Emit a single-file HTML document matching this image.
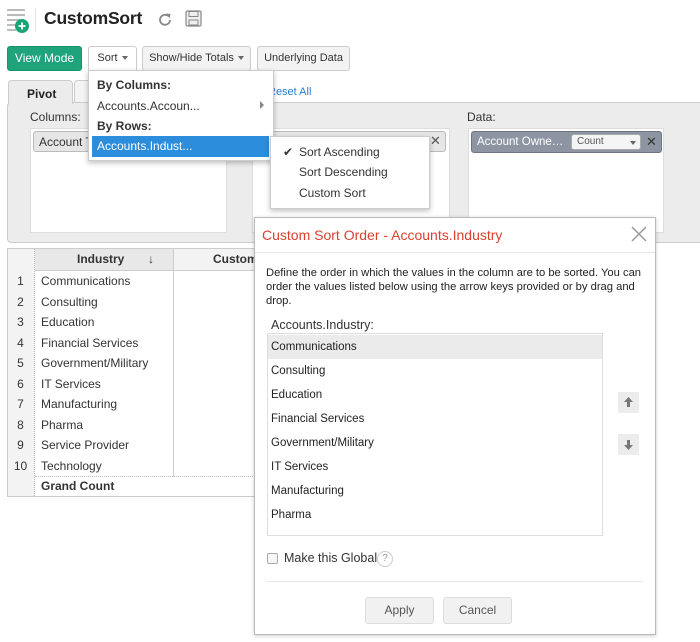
<!DOCTYPE html>
<html><head><meta charset="utf-8"><style>
*{box-sizing:border-box;margin:0;padding:0}
body{width:700px;height:642px;background:#fff;font-family:"Liberation Sans",Arial,sans-serif;font-size:12px;color:#333;position:relative;overflow:hidden}
.a{position:absolute}
.btn{position:absolute;top:46px;height:25px;border:1px solid #ccc;border-radius:3px;background:#f3f3f3;font-size:11px;color:#333;line-height:23px;text-align:center}
.caret{display:inline-block;width:0;height:0;border-left:3.5px solid transparent;border-right:3.5px solid transparent;border-top:4px solid #666;vertical-align:middle;margin-left:4px}
.box{position:absolute;background:#fff;border:1px solid #ddd}
.row{position:absolute;left:7px;width:167px;height:20.5px;line-height:20.5px;font-size:12px;color:#333}
.row .n{position:absolute;left:0;width:27px;text-align:center}
.row .t{position:absolute;left:34px}
.li{position:absolute;left:268px;width:334px;height:24px;line-height:24px;padding-left:3px;font-size:11.5px;color:#222}
</style></head><body>
<svg class="a" style="left:6px;top:8px" width="24" height="26" viewBox="0 0 24 26">
<g stroke="#bbb" stroke-width="2"><line x1="1" y1="2" x2="19" y2="2"/><line x1="1" y1="7" x2="19" y2="7"/><line x1="1" y1="12" x2="14" y2="12"/><line x1="1" y1="17" x2="10" y2="17"/><line x1="1" y1="22" x2="10" y2="22"/></g>
<circle cx="16" cy="18" r="7" fill="#18a576"/><path d="M16 14.5v7M12.5 18h7" stroke="#fff" stroke-width="1.8"/></svg>
<div class="a" style="left:35px;top:8px;width:1px;height:24px;background:#e3e3e3"></div>
<div class="a" style="left:44px;top:8px;font-size:17.5px;font-weight:bold;color:#222;letter-spacing:-0.2px">CustomSort</div>
<svg class="a" style="left:157px;top:11px" width="17" height="17" viewBox="0 0 17 17"><path d="M13 9a5 5 0 1 1-2-4.2" fill="none" stroke="#888" stroke-width="1.8"/><path d="M9 2.5l4.5 0.5-1 4.5z" fill="#888"/></svg>
<svg class="a" style="left:185px;top:10px" width="17" height="17" viewBox="0 0 17 17"><rect x="1" y="1" width="15" height="15" rx="1.5" fill="#eee" stroke="#888" stroke-width="1.2"/><rect x="4" y="1.5" width="9" height="5" fill="none" stroke="#888"/><rect x="4" y="10" width="9" height="5" fill="none" stroke="#888"/></svg>
<div class="btn" style="left:7px;width:75px;background:#1fa37b;border-color:#17936d;color:#fff;font-size:12px">View Mode</div>
<div class="btn" style="left:88px;width:49px;background:#fff;border-bottom-color:#fff;height:26px">Sort<span class="caret"></span></div>
<div class="btn" style="left:142px;width:109px">Show/Hide Totals<span class="caret"></span></div>
<div class="btn" style="left:257px;width:93px">Underlying Data</div>
<div class="a" style="left:7px;top:102px;width:700px;height:141px;background:#ececec;border:1px solid #ccc;border-radius:4px 0 0 4px"></div>
<div class="a" style="left:8px;top:80px;width:65px;height:24px;background:#ececec;border:1px solid #ccc;border-bottom:none;border-radius:4px 4px 0 0;font-weight:bold;font-size:12px;padding:6px 0 0 18px;color:#222">Pivot</div>
<div class="a" style="left:74px;top:80px;width:50px;height:22px;background:#f4f4f4;border:1px solid #ccc;border-bottom:none;border-radius:4px 4px 0 0"></div>
<div class="a" style="left:268px;top:86px;color:#2a7dd0;font-size:11px">Reset All</div>
<div class="a" style="left:30px;top:110px;font-size:12px">Columns:</div>
<div class="box" style="left:30px;top:128px;width:197px;height:105px"></div>
<div class="a" style="left:33px;top:131px;width:90px;height:21px;background:#e6e6e6;border:1px solid #bbb;border-radius:3px;padding:3px 5px;font-size:12px">Account Type</div>
<div class="box" style="left:252px;top:128px;width:198px;height:105px"></div>
<div class="a" style="left:256px;top:131px;width:190px;height:21px;background:#e6e6e6;border:1px solid #bbb;border-radius:3px"></div>
<div class="a" style="left:430px;top:133px;font-size:13px;color:#555">✕</div>
<div class="a" style="left:467px;top:110px;font-size:12px">Data:</div>
<div class="box" style="left:468px;top:128px;width:196px;height:105px"></div>
<div class="a" style="left:471px;top:131px;width:191px;height:22px;background:#8d95a2;border:1px solid #6e7683;border-radius:3px;padding:4px 5px;font-size:11.5px;color:#fff">Account Owne…</div>
<div class="a" style="left:571px;top:134px;width:70px;height:16px;background:#f5f5f5;border:1px solid #aaa;border-radius:3px;font-size:10px;padding:1px 5px;color:#555">Count<span class="caret" style="position:absolute;right:4px;top:6px"></span></div>
<div class="a" style="left:646px;top:134px;font-size:13px;color:#333">✕</div>
<div class="a" style="left:7px;top:248px;width:260px;height:249px;border:1px solid #ccc;background:#fff"></div>
<div class="a" style="left:8px;top:249px;width:27px;height:247px;background:#f3f3f3;border-right:1px dotted #bbb"></div>
<div class="a" style="left:35px;top:249px;width:139px;height:22px;background:#e8e8e8;border-bottom:1px solid #ccc;font-weight:bold;font-size:12px;line-height:21px;padding-left:42px">Industry<span style="position:absolute;left:113px;font-weight:normal">↓</span></div>
<div class="a" style="left:173px;top:249px;width:94px;height:22px;background:#f3f3f3;border-left:1px solid #ccc;border-bottom:1px solid #ccc;font-weight:bold;line-height:21px;padding-left:39px">Custom</div>
<div class="a" style="left:173px;top:271px;width:1px;height:225px;background:#ccc"></div>
<div class="row" style="top:271px"><span class="n">1</span><span class="t">Communications</span></div>
<div class="row" style="top:291.5px"><span class="n">2</span><span class="t">Consulting</span></div>
<div class="row" style="top:312px"><span class="n">3</span><span class="t">Education</span></div>
<div class="row" style="top:332.5px"><span class="n">4</span><span class="t">Financial Services</span></div>
<div class="row" style="top:353px"><span class="n">5</span><span class="t">Government/Military</span></div>
<div class="row" style="top:373.5px"><span class="n">6</span><span class="t">IT Services</span></div>
<div class="row" style="top:394px"><span class="n">7</span><span class="t">Manufacturing</span></div>
<div class="row" style="top:414.5px"><span class="n">8</span><span class="t">Pharma</span></div>
<div class="row" style="top:435px"><span class="n">9</span><span class="t">Service Provider</span></div>
<div class="row" style="top:455.5px"><span class="n">10</span><span class="t">Technology</span></div>
<div class="a" style="left:35px;top:476px;width:232px;height:1px;border-top:1px dotted #bbb"></div>
<div class="a" style="left:35px;top:477px;width:139px;height:19px;background:#fff;font-weight:bold;line-height:19px;padding-left:6px">Grand Count</div>
<div class="a" style="left:88px;top:70px;width:186px;height:91px;background:#fff;border:1px solid #ccc;box-shadow:0 2px 5px rgba(0,0,0,.25)"></div>
<div class="a" style="left:97px;top:78px;font-weight:bold;font-size:12px">By Columns:</div>
<div class="a" style="left:97px;top:99px;font-size:12px">Accounts.Accoun...</div>
<div class="a" style="left:260px;top:101px;width:0;height:0;border-top:4px solid transparent;border-bottom:4px solid transparent;border-left:4px solid #888"></div>
<div class="a" style="left:97px;top:119px;font-weight:bold;font-size:12px">By Rows:</div>
<div class="a" style="left:92px;top:136px;width:177px;height:21px;background:#2b8ddc;color:#fff;padding:3px 5px;font-size:12px">Accounts.Indust...</div>
<div class="a" style="left:270px;top:136px;width:160px;height:73px;background:#fff;border:1px solid #ccc;box-shadow:0 2px 5px rgba(0,0,0,.25)"></div>
<div class="a" style="left:283px;top:145px;font-size:12px">✔</div>
<div class="a" style="left:299px;top:145px;font-size:12px">Sort Ascending</div>
<div class="a" style="left:299px;top:165px;font-size:12px">Sort Descending</div>
<div class="a" style="left:299px;top:186px;font-size:12px">Custom Sort</div>
<div class="a" style="left:254px;top:217px;width:402px;height:418px;background:#fff;border:1px solid #bbb;box-shadow:0 1px 4px rgba(0,0,0,.2)"></div>
<div class="a" style="left:262px;top:227px;font-size:14px;color:#d9412f">Custom Sort Order - Accounts.Industry</div>
<svg class="a" style="left:630px;top:225px" width="18" height="18" viewBox="0 0 18 18"><path d="M2 2L16 16M16 2L2 16" stroke="#999" stroke-width="1.5"/></svg>
<div class="a" style="left:255px;top:252px;width:400px;height:1px;background:#e5e5e5"></div>
<div class="a" style="left:266px;top:266px;width:385px;font-size:11.2px;line-height:14px;color:#222">Define the order in which the values in the column are to be sorted. You can order the values listed below using the arrow keys provided or by drag and drop.</div>
<div class="a" style="left:271px;top:318px;font-size:12.5px;color:#333">Accounts.Industry:</div>
<div class="box" style="left:267px;top:333px;width:336px;height:203px;border-color:#ddd"></div>
<div class="li" style="top:335px;background:#ebebeb">Communications</div>
<div class="li" style="top:359px">Consulting</div>
<div class="li" style="top:383px">Education</div>
<div class="li" style="top:407px">Financial Services</div>
<div class="li" style="top:431px">Government/Military</div>
<div class="li" style="top:455px">IT Services</div>
<div class="li" style="top:479px">Manufacturing</div>
<div class="li" style="top:503px">Pharma</div>
<div class="a" style="left:618px;top:392px;width:21px;height:21px;background:#ececec"></div>
<svg class="a" style="left:618px;top:392px" width="21" height="21" viewBox="0 0 21 21"><path d="M10.5 5l4.5 5h-3v5h-3v-5h-3z" fill="#777"/></svg>
<div class="a" style="left:618px;top:434px;width:21px;height:21px;background:#ececec"></div>
<svg class="a" style="left:618px;top:434px" width="21" height="21" viewBox="0 0 21 21"><path d="M10.5 16l4.5-5h-3v-5h-3v5h-3z" fill="#777"/></svg>
<div class="a" style="left:267px;top:553px;width:11px;height:11px;border:1px solid #aaa;border-radius:2px;background:#f6f6f6"></div>
<div class="a" style="left:284px;top:551px;font-size:12.5px;color:#333">Make this Global</div>
<div class="a" style="left:377px;top:551px;width:16px;height:16px;border:1px solid #ccc;border-radius:50%;font-size:10px;color:#999;text-align:center;line-height:14px">?</div>
<div class="a" style="left:267px;top:581px;width:376px;height:1px;background:#e8e8e8"></div>
<div class="a" style="left:365px;top:597px;width:69px;height:27px;background:#f1f1f1;border:1px solid #ddd;border-radius:3px;text-align:center;line-height:25px;font-size:12px;color:#555">Apply</div>
<div class="a" style="left:443px;top:597px;width:69px;height:27px;background:#f1f1f1;border:1px solid #ddd;border-radius:3px;text-align:center;line-height:25px;font-size:12px;color:#555">Cancel</div>
</body></html>
